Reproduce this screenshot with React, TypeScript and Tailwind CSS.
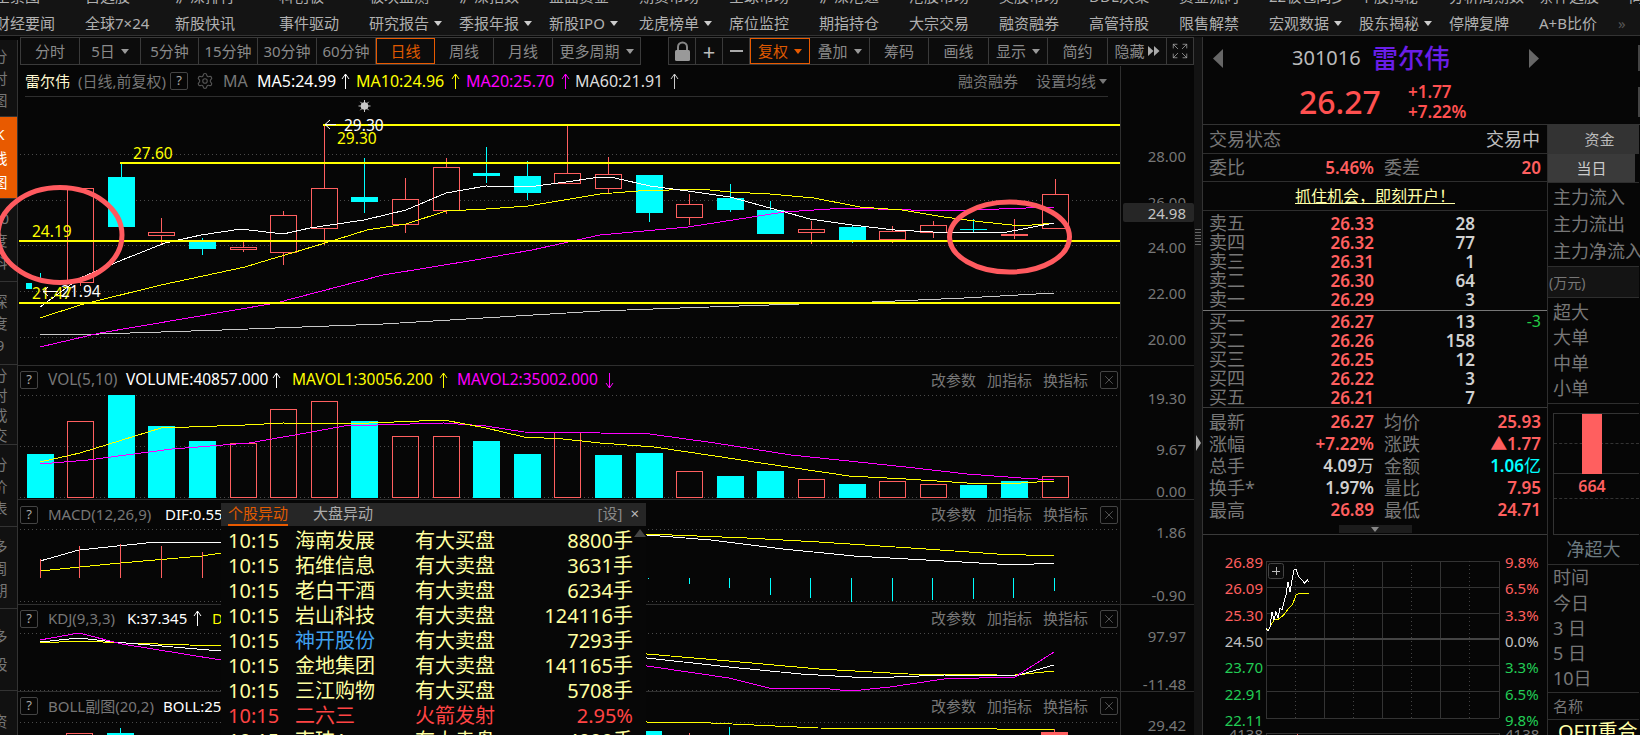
import { Expand, Settings, X as XIcon } from 'lucide-react';

const RED = '#ff5f5f';
const CYAN = '#00ffff';
const cx = (i: number) => 39.6 + 40.6 * i;
const pts = (p: number[][]) => p.map((q) => q.join(',')).join(' ');

// type, body top, body bottom, wick top, wick bottom
const candles: [string, number, number, number, number][] = [
    ['c', 283, 289, 270, 279],
    ['r', 188, 282, 188, 286],
    ['c', 177, 227, 163, 227],
    ['r', 232, 235, 218, 245],
    ['c', 242, 249, 238, 255],
    ['r', 247, 249, 242, 252],
    ['r', 215, 252, 211, 265],
    ['r', 188, 228, 125, 245],
    ['c', 197, 202, 158, 213],
    ['r', 199, 224, 178, 233],
    ['r', 167, 210, 158, 214],
    ['c', 173, 176, 147, 183],
    ['c', 176, 193, 161, 200],
    ['r', 173, 183, 125, 183],
    ['r', 174, 188, 157, 193],
    ['c', 175, 213, 175, 222],
    ['r', 204, 217, 194, 225],
    ['c', 198, 210, 184, 212],
    ['c', 210, 234, 201, 234],
    ['r', 229, 232, 221, 244],
    ['c', 227, 240, 225, 243],
    ['r', 231, 239, 226, 243],
    ['r', 225, 232, 221, 238],
    ['c', 229, 230, 219, 232],
    ['r', 234, 235, 219, 239],
    ['r', 194, 228, 179, 228],
];

const ma5 = [[40, 307], [80, 278], [122, 260], [165, 243], [201, 235], [241, 229], [283, 234], [310, 228], [364, 220], [406, 210], [446, 193], [486, 186], [528, 187], [566, 182], [600, 177], [615, 178], [650, 186], [688, 191], [730, 197], [770, 208], [810, 219], [852, 225], [895, 230], [933, 232], [975, 232], [1002, 233], [1054, 223]];
const ma10 = [[40, 318], [80, 305], [161, 285], [245, 267], [268, 260], [302, 250], [335, 240], [367, 230], [406, 224], [446, 211], [486, 209], [528, 206], [600, 194], [638, 191], [700, 189], [730, 192], [770, 194], [814, 198], [860, 207], [902, 210], [944, 217], [983, 222], [1021, 226], [1054, 223]];
const ma20 = [[40, 347], [100, 333], [276, 303], [383, 275], [475, 260], [532, 250], [600, 235], [688, 227], [784, 212], [845, 208], [944, 211], [1054, 207]];
const ma60 = [[40, 335], [100, 334], [222, 330], [383, 324], [600, 311], [680, 308], [799, 304], [872, 302], [964, 298], [1054, 293]];

const volTops: [string, number][] = [['c', 454], ['r', 421], ['c', 395], ['c', 426], ['c', 441], ['r', 443], ['r', 409], ['r', 401], ['c', 421], ['r', 436], ['r', 436], ['c', 441], ['c', 454], ['r', 432], ['c', 455], ['c', 453], ['r', 471], ['c', 476], ['c', 471], ['r', 479], ['c', 484], ['r', 481], ['r', 484], ['c', 485], ['c', 481], ['r', 476]];
const mavol1 = [[40, 462], [80, 453], [161, 428], [245, 425], [283, 423], [344, 424], [444, 420], [486, 428], [524, 437], [563, 439], [600, 443], [654, 447], [715, 456], [761, 463], [849, 476], [906, 479], [967, 483], [1021, 483], [1054, 481]];
const mavol2 = [[40, 464], [88, 460], [172, 449], [249, 443], [306, 433], [344, 426], [444, 423], [486, 426], [524, 432], [600, 433], [650, 434], [715, 443], [791, 455], [906, 467], [967, 474], [1021, 478], [1054, 480]];

const macdW = [[40, 561], [79, 550], [156, 542], [221, 542], [647, 535], [711, 540], [783, 549], [854, 556], [926, 560], [997, 564], [1015, 565], [1054, 563]];
const macdY = [[40, 571], [120, 563], [202, 556], [221, 553], [647, 534], [747, 538], [819, 542], [926, 549], [997, 554], [1054, 556]];
const macdRed: [number, number][] = [[40, 559], [79, 546], [120, 544], [161, 546], [202, 552]];
const macdCyan: [number, number][] = [[648, 579], [689, 584], [729, 588], [770, 595], [810, 598], [851, 602], [892, 601], [932, 600], [973, 599], [1013, 598], [1054, 591]];

const kdjM = [[40, 640], [79, 633], [122, 644], [221, 660], [647, 666], [729, 678], [769, 688], [819, 688], [851, 691], [890, 687], [944, 679], [1015, 677], [1054, 652]];
const kdjW = [[40, 642], [79, 638], [114, 642], [221, 651], [647, 658], [729, 667], [801, 674], [869, 678], [944, 675], [1015, 676], [1054, 665]];
const kdjY = [[40, 643], [79, 641], [126, 643], [221, 646], [647, 654], [729, 661], [819, 669], [908, 674], [997, 675], [1015, 675], [1054, 671]];

const navTop = ['全景图', '自选股', '沪深排行', '科创板', '板块监测', '沪深指数', '盘面资金', '期货市场', '全球市场', '沪深港通', '港股市场', '美股市场', 'DDE决策', '资金流向', '22板包同步', '个股揭秘', '分析周期数', '条件选股', '同花顺'];
const navBottom: [string, string, boolean][] = [
    ['财经要闻', 'w-[90px]', false],
    ['全球7×24', 'w-[90px]', false],
    ['新股快讯', 'w-[104px]', false],
    ['事件驱动', 'w-[90px]', false],
    ['研究报告', 'w-[90px]', true],
    ['季报年报', 'w-[90px]', true],
    ['新股IPO', 'w-[90px]', true],
    ['龙虎榜单', 'w-[90px]', true],
    ['席位监控', 'w-[90px]', false],
    ['期指持仓', 'w-[90px]', false],
    ['大宗交易', 'w-[90px]', false],
    ['融资融券', 'w-[90px]', false],
    ['高管持股', 'w-[90px]', false],
    ['限售解禁', 'w-[90px]', false],
    ['宏观数据', 'w-[90px]', true],
    ['股东揭秘', 'w-[90px]', true],
    ['停牌复牌', 'w-[90px]', false],
    ['A+B比价', 'w-[79px]', false],
];

const sideGroups: { h: string; gap: string; chars: string[]; active?: boolean }[] = [
    { h: 'h-[77px]', gap: 'gap-[6px]', chars: ['分', '时', '图'] },
    { h: 'h-[82px]', gap: 'gap-[8px]', chars: ['K', '线', '图'], active: true },
    { h: 'h-[83px]', gap: 'gap-[6px]', chars: ['10', '度', '科'] },
    { h: 'h-[83px]', gap: 'gap-[6px]', chars: ['探', '度', '9'] },
    { h: 'h-[80px]', gap: 'gap-[4px]', chars: ['分', '时', '成', '交'] },
    { h: 'h-[82px]', gap: 'gap-[6px]', chars: ['分', '价', '表'] },
    { h: 'h-[82px]', gap: 'gap-[6px]', chars: ['多', '周', '期'] },
    { h: 'h-[82px]', gap: 'gap-[12px]', chars: ['多', '股'] },
    { h: 'h-[60px]', gap: 'gap-[6px]', chars: ['资'] },
];

const popRows = [
    ['海南发展', '有大买盘', '8800手'],
    ['拓维信息', '有大卖盘', '3631手'],
    ['老白干酒', '有大卖盘', '6234手'],
    ['岩山科技', '有大卖盘', '124116手'],
    ['神开股份', '有大卖盘', '7293手'],
    ['金地集团', '有大卖盘', '141165手'],
    ['三江购物', '有大买盘', '5708手'],
    ['二六三', '火箭发射', '2.95%'],
    ['南玻A', '有大卖盘', '4000手'],
];

const asks = [['卖五', '26.33', '28'], ['卖四', '26.32', '77'], ['卖三', '26.31', '1'], ['卖二', '26.30', '64'], ['卖一', '26.29', '3']];
const bids = [['买一', '26.27', '13', '-3'], ['买二', '26.26', '158'], ['买三', '26.25', '12'], ['买四', '26.22', '3'], ['买五', '26.21', '7']];

function Caret({ className = '' }: { className?: string }) {
    return (
        <svg width="8" height="5" viewBox="0 0 8 5" className={className}>
            <polygon points="0,0 8,0 4,5" fill="currentColor" />
        </svg>
    );
}

function Arrow({ color, down = false }: { color: string; down?: boolean }) {
    return (
        <svg width="9" height="17" viewBox="0 0 9 17" className={down ? 'rotate-180' : ''}>
            <path d="M4.5 1V16M1 6L4.5 1L8 6" fill="none" stroke={color} strokeWidth="1" />
        </svg>
    );
}

function Ask() {
    return (
        <span className="flex h-[18px] w-[18px] items-center justify-center rounded-[2px] border border-[#444] text-[13px] text-[#aaa]">?</span>
    );
}

function Tools() {
    return (
        <div className="ml-auto flex items-center text-[15px] text-[#777]">
            <span className="w-[56px]">改参数</span>
            <span className="w-[56px]">加指标</span>
            <span className="w-[57px]">换指标</span>
            <span className="flex h-[18px] w-[18px] items-center justify-center rounded-[2px] border border-[#444] text-[#888]">
                <XIcon size={14} strokeWidth={1} />
            </span>
        </div>
    );
}

function Dots({ ys }: { ys: number[] }) {
    return (
        <>
            {ys.map((y) => (
                <line key={y} x1="20" x2="1122" y1={y + 0.5} y2={y + 0.5} stroke="#4a4a4a" strokeDasharray="1 3" />
            ))}
        </>
    );
}

function Line({ p, color }: { p: number[][]; color: string }) {
    return <polyline points={pts(p)} fill="none" stroke={color} strokeWidth="1" shapeRendering="crispEdges" />;
}

function MainChart() {
    return (
        <svg width="1102" height="268" viewBox="18 97 1102 268" className="block">
            <Dots ys={[154, 200, 245, 291, 337]} />
            {candles.map(([t, top, bot, wt, wb], i) => {
                const x = Math.round(cx(i));
                const c = t === 'c' ? CYAN : RED;
                return (
                    <g key={i} shapeRendering="crispEdges">
                        {i > 0 && <line x1={x + 0.5} x2={x + 0.5} y1={wt} y2={wb} stroke={c} />}
                        {i === 0 ? (
                            <rect x="26" y={top} width="6" height={bot - top} fill={c} />
                        ) : t === 'c' ? (
                            <rect x={x - 13} y={top} width="27" height={Math.max(bot - top, 1)} fill={c} />
                        ) : (
                            <rect x={x - 13 + 0.5} y={top + 0.5} width="26" height={bot - top} fill="#060606" stroke={c} />
                        )}
                    </g>
                );
            })}
            <line x1="40.5" x2="40.5" y1="273" y2="279" stroke={CYAN} />
            <Line p={ma60} color="#c8c8c8" />
            <Line p={ma20} color="#ff00ff" />
            <Line p={ma10} color="#ffff00" />
            <Line p={ma5} color="#ffffff" />
            <g shapeRendering="crispEdges" fill="#ffff00">
                <rect x="323" y="124" width="797" height="2" />
                <rect x="120" y="162" width="1000" height="2" />
                <rect x="19" y="240" width="1101" height="2" />
                <rect x="19" y="302" width="1101" height="2" />
            </g>
            <g className="text-[15.5px]">
                <text x="133" y="159" fill="#ffff00">27.60</text>
                <text x="337" y="144" fill="#ffff00">29.30</text>
                <text x="344" y="131" fill="#ffffff">29.30</text>
                <text x="32" y="237" fill="#ffff00">24.19</text>
                <text x="32" y="299" fill="#ffff00">21.47</text>
                <text x="61" y="297" fill="#ffffff">21.94</text>
            </g>
            <path d="M330 120L325 124.5L330 129M325 124.5H336" fill="none" stroke="#fff" />
            <path d="M48 287L43 291.5L48 296M43 291.5H58" fill="none" stroke="#fff" />
            <circle cx="364.5" cy="106" r="3.8" fill="#c8c8c8" />
            <path d="M364.5 100V112M358.5 106H370.5M360.3 101.8L368.7 110.2M368.7 101.8L360.3 110.2" stroke="#c8c8c8" />
        </svg>
    );
}

function VolChart() {
    return (
        <svg width="1102" height="105" viewBox="18 394 1102 105" className="block">
            <Dots ys={[395, 446, 497]} />
            {volTops.map(([t, top], i) => {
                const x = Math.round(cx(i));
                return t === 'c' ? (
                    <rect key={i} x={x - 13} y={top} width="27" height={498 - top} fill={CYAN} shapeRendering="crispEdges" />
                ) : (
                    <rect key={i} x={x - 13 + 0.5} y={top + 0.5} width="26" height={497 - top} fill="none" stroke={RED} shapeRendering="crispEdges" />
                );
            })}
            <Line p={mavol2} color="#ff00ff" />
            <Line p={mavol1} color="#ffff00" />
        </svg>
    );
}

function MacdChart() {
    return (
        <svg width="1102" height="75" viewBox="18 529 1102 75" className="block">
            <Dots ys={[529, 601]} />
            <Line p={macdW} color="#ffffff" />
            <Line p={macdY} color="#ffff00" />
            {macdRed.map(([x, y]) => (
                <line key={x} x1={x + 0.5} x2={x + 0.5} y1={y} y2="578" stroke={RED} shapeRendering="crispEdges" />
            ))}
            {macdCyan.map(([x, y]) => (
                <line key={x} x1={x + 0.5} x2={x + 0.5} y1="578" y2={y} stroke={CYAN} shapeRendering="crispEdges" />
            ))}
        </svg>
    );
}

function KdjChart() {
    return (
        <svg width="1102" height="59" viewBox="18 632 1102 59" className="block">
            <Dots ys={[633, 690]} />
            <Line p={kdjY} color="#ffff00" />
            <Line p={kdjW} color="#ffffff" />
            <Line p={kdjM} color="#ff00ff" />
        </svg>
    );
}

function BollChart() {
    return (
        <svg width="1102" height="15" viewBox="18 720 1102 15" className="block">
            <Dots ys={[722]} />
            <g shapeRendering="crispEdges">
                <rect x="107" y="733" width="27" height="3" fill={CYAN} />
                <rect x="66.5" y="733.5" width="26" height="5" fill="none" stroke={RED} />
                <line x1="120.5" x2="120.5" y1="728" y2="733" stroke={CYAN} />
                <rect x="635" y="731" width="27" height="5" fill={CYAN} />
                <rect x="1041" y="732" width="27" height="4" fill={RED} />
                <line x1="1054.5" x2="1054.5" y1="729" y2="732" stroke={RED} />
                <line x1="689.5" x2="689.5" y1="733" y2="736" stroke={RED} />
                <line x1="729.5" x2="729.5" y1="727" y2="736" stroke={CYAN} />
            </g>
            <Line p={[[221, 721], [647, 722], [711, 723], [818, 728], [997, 729], [1054, 730]]} color="#ffff00" />
        </svg>
    );
}

function MiniChart() {
    const whiteP = [[232, 350], [238, 358], [244, 345], [250, 300], [256, 325], [262, 300], [268, 318], [274, 290], [280, 295], [286, 270], [292, 250], [298, 210], [304, 240], [310, 205], [316, 175], [322, 172], [330, 195], [340, 205], [348, 215], [356, 205], [362, 212]];
    const yellowP = [[232, 352], [240, 355], [250, 335], [258, 322], [270, 322], [285, 310], [300, 290], [312, 278], [322, 250], [335, 244], [362, 244]];
    const conv = (p: number[][]) => p.map(([x, y]) => [(x - 232) / 3, (y - 148) / 3]);
    return (
        <svg width="234" height="158" viewBox="0 0 234 158" className="block">
            <g shapeRendering="crispEdges" stroke="#333">
                {[0, 26, 52, 78, 104, 130, 157].map((y) => (
                    <line key={y} x1="0" x2="233" y1={y + 0.5} y2={y + 0.5} />
                ))}
                {[0, 58, 116, 174, 233].map((x) => (
                    <line key={x} x1={x + 0.5} x2={x + 0.5} y1="0" y2="157" />
                ))}
                {[29, 87, 145, 203].map((x) => (
                    <line key={x} x1={x + 0.5} x2={x + 0.5} y1="0" y2="157" strokeDasharray="1 3" stroke="#444" />
                ))}
                <rect x="0" y="77" width="233" height="2" fill="#444" stroke="none" />
            </g>
            <Line p={conv(yellowP)} color="#ffff00" />
            <Line p={conv(whiteP)} color="#ffffff" />
            <rect x="2.5" y="2.5" width="15" height="15" rx="2" fill="#0a0a0a" stroke="#444" />
            <path d="M10 6V14M6 10H14" stroke="#bbb" shapeRendering="crispEdges" />
        </svg>
    );
}

function ToolCell({ w, active, children }: { w: string; active?: boolean; children: React.ReactNode }) {
    return (
        <div className={`flex h-full items-center justify-center gap-[6px] border-r ${w} ${active ? 'border border-[#e85a00] text-[#e05a00]' : 'border-[#3a3a3a]'}`}>
            {children}
        </div>
    );
}

function Toolbar() {
    return (
        <div className="flex h-[28px] items-start text-[15px] text-[#8a8a8a]">
            <div className="ml-[2px] flex h-[28px] border border-[#3a3a3a] bg-[#0c0c0c]">
                <ToolCell w="w-[59px]">分时</ToolCell>
                <ToolCell w="w-[61px]">5日<Caret className="text-[#999]" /></ToolCell>
                <ToolCell w="w-[58px]">5分钟</ToolCell>
                <ToolCell w="w-[59px]">15分钟</ToolCell>
                <ToolCell w="w-[59px]">30分钟</ToolCell>
                <ToolCell w="w-[59px]">60分钟</ToolCell>
                <ToolCell w="w-[59px]" active>日线</ToolCell>
                <ToolCell w="w-[59px]">周线</ToolCell>
                <ToolCell w="w-[59px]">月线</ToolCell>
                <div className="flex w-[87px] items-center justify-center gap-[6px]">更多周期<Caret className="text-[#999]" /></div>
            </div>
            <div className="ml-[27px] flex h-[28px] border border-[#3a3a3a] bg-[#0c0c0c]">
                <ToolCell w="w-[27px]">
                    <svg width="17" height="21" viewBox="0 0 17 21">
                        <path d="M4 9V6a4.5 4.5 0 0 1 9 0v3" fill="none" stroke="#888" strokeWidth="2" />
                        <rect x="1" y="9" width="15" height="11" rx="1.5" fill="#999" />
                    </svg>
                </ToolCell>
                <ToolCell w="w-[27px]"><span className="text-[22px] leading-none text-[#bbb]">+</span></ToolCell>
                <ToolCell w="w-[27px]"><span className="h-[2px] w-[13px] bg-[#aaa]" /></ToolCell>
                <ToolCell w="w-[60px]" active>复权<Caret className="text-[#e85a00]" /></ToolCell>
                <ToolCell w="w-[60px]">叠加<Caret className="text-[#999]" /></ToolCell>
                <ToolCell w="w-[59px]">筹码</ToolCell>
                <ToolCell w="w-[60px]">画线</ToolCell>
                <ToolCell w="w-[59px]">显示<Caret className="text-[#999]" /></ToolCell>
                <ToolCell w="w-[60px]">简约</ToolCell>
                <ToolCell w="w-[59px]">
                    <span className="flex items-center gap-[3px]">隐藏
                        <svg width="12" height="10" viewBox="0 0 12 10"><path d="M0 0L5.5 5L0 10ZM6 0L11.5 5L6 10Z" fill="#aaa" /></svg>
                    </span>
                </ToolCell>
                <div className="flex w-[26px] items-center justify-center text-[#aaa]"><Expand size={18} strokeWidth={1} /></div>
            </div>
        </div>
    );
}

function Axis({ children, className = '' }: { children: React.ReactNode; className?: string }) {
    return <div className={`relative flex h-full w-[74px] flex-col items-end border-l border-[#2e2e2e] pr-[8px] text-[15px] leading-[18px] text-[#777] ${className}`}>{children}</div>;
}

function Center() {
    return (
        <div className="w-[1176px] shrink-0">
            <Toolbar />
            {/* main chart */}
            <div className="mt-[1px] flex h-[300px] border-b border-[#2e2e2e]">
                <div className="w-[1102px]">
                    <div className="ml-[7px] flex h-[31px] w-[1083px] items-center border-b border-[#2e2e2e] text-[16px] text-[#777]">
                        <span className="w-[53px] text-[15px] text-[#fff8d0]">雷尔伟</span>
                        <span className="w-[92px] text-[15px]">(日线,前复权)</span>
                        <Ask />
                        <span className="ml-[8px] flex w-[27px] text-[#555]"><Settings size={18} strokeWidth={1.5} /></span>
                        <span className="w-[34px]">MA</span>
                        <span className="w-[84px] text-white">MA5:24.99</span>
                        <span className="w-[15px]"><Arrow color="#fff" /></span>
                        <span className="w-[95px] text-[#ffff00]">MA10:24.96</span>
                        <span className="w-[15px]"><Arrow color="#ffff00" /></span>
                        <span className="w-[95px] text-[#ff00ff]">MA20:25.70</span>
                        <span className="w-[14px]"><Arrow color="#ff00ff" /></span>
                        <span className="w-[95px] text-[#ddd]">MA60:21.91</span>
                        <Arrow color="#ccc" />
                        <span className="ml-auto w-[78px] text-[15px]">融资融券</span>
                        <span className="flex w-[72px] items-center gap-[3px] text-[15px]">设置均线<Caret /></span>
                    </div>
                    <MainChart />
                </div>
                <Axis>
                    <span className="mt-[81px]">28.00</span>
                    <span className="mt-[28px]">26.00</span>
                    <span className="mt-[27px]">24.00</span>
                    <span className="mt-[28px]">22.00</span>
                    <span className="mt-[28px]">20.00</span>
                    <span className="absolute left-[2px] right-0 top-[137px] flex h-[19px] items-center justify-end rounded-[2px] bg-[#262626] pr-[8px] text-[#c4c4c4]">24.98</span>
                </Axis>
            </div>
            {/* VOL */}
            <div className="flex h-[134px] border-b border-[#2e2e2e]">
                <div className="w-[1102px]">
                    <div className="flex h-[28px] items-center pl-[2px] text-[15.5px] text-[#777]">
                        <Ask />
                        <span className="ml-[10px] w-[78px]">VOL(5,10)</span>
                        <span className="w-[146px] text-white">VOLUME:40857.000</span>
                        <span className="w-[20px]"><Arrow color="#fff" /></span>
                        <span className="w-[147px] text-[#ffff00]">MAVOL1:30056.200</span>
                        <span className="w-[18px]"><Arrow color="#ffff00" /></span>
                        <span className="w-[148px] text-[#ff00ff]">MAVOL2:35002.000</span>
                        <Arrow color="#ff00ff" down />
                        <Tools />
                        <span className="w-[2px]" />
                    </div>
                    <VolChart />
                </div>
                <Axis>
                    <span className="mt-[23px]">19.30</span>
                    <span className="mt-[33px]">9.67</span>
                    <span className="mt-[24px]">0.00</span>
                </Axis>
            </div>
            {/* MACD */}
            <div className="flex h-[105px] border-b border-[#2e2e2e]">
                <div className="w-[1102px]">
                    <div className="flex h-[29px] items-center pl-[2px] text-[15px] text-[#777]">
                        <Ask />
                        <span className="ml-[10px] w-[117px]">MACD(12,26,9)</span>
                        <span className="text-white">DIF:0.55</span>
                        <Tools />
                        <span className="w-[2px]" />
                    </div>
                    <MacdChart />
                </div>
                <Axis>
                    <span className="mt-[23px]">1.86</span>
                    <span className="mt-[45px]">-0.90</span>
                </Axis>
            </div>
            {/* KDJ */}
            <div className="flex h-[87px] border-b border-[#2e2e2e]">
                <div className="w-[1102px]">
                    <div className="flex h-[27px] items-center pl-[2px] text-[15px] text-[#777]">
                        <Ask />
                        <span className="ml-[10px] w-[79px]">KDJ(9,3,3)</span>
                        <span className="w-[66px] text-white">K:37.345</span>
                        <span className="w-[19px]"><Arrow color="#fff" /></span>
                        <span className="text-[#ffff00]">D</span>
                        <Tools />
                        <span className="w-[2px]" />
                    </div>
                    <KdjChart />
                </div>
                <Axis>
                    <span className="mt-[22px]">97.97</span>
                    <span className="mt-[30px]">-11.48</span>
                </Axis>
            </div>
            {/* BOLL */}
            <div className="flex h-[43px] overflow-hidden">
                <div className="w-[1102px]">
                    <div className="flex h-[28px] items-center pl-[2px] text-[15px] text-[#777]">
                        <Ask />
                        <span className="ml-[10px] w-[115px]">BOLL副图(20,2)</span>
                        <span className="text-white">BOLL:25</span>
                        <Tools />
                        <span className="w-[2px]" />
                    </div>
                    <BollChart />
                </div>
                <Axis>
                    <span className="mt-[24px]">29.42</span>
                </Axis>
            </div>
        </div>
    );
}

function BookRow({ r }: { r: string[] }) {
    return (
        <div className="grid h-[19px] grid-cols-[171px_101px_66px] items-center leading-[19px]">
            <div className="flex items-center justify-between pl-[6px] pr-0">
                <span className="text-[18px] text-[#777]">{r[0]}</span>
                <span className="text-[17px] font-semibold text-[#ff5f5f]">{r[1]}</span>
            </div>
            <span className="text-right text-[17px] font-semibold text-[#d0d0d0]">{r[2]}</span>
            <span className="text-right text-[16px] text-[#22cc44]">{r[3]}</span>
        </div>
    );
}

function StatRow({ a, b, c, d, bColor = 'text-[#ff5f5f]', dColor = 'text-[#ff5f5f]' }: { a: string; b: React.ReactNode; c: string; d: React.ReactNode; bColor?: string; dColor?: string }) {
    return (
        <div className="grid h-[22px] grid-cols-[171px_167px] items-center text-[18px] leading-[22px] text-[#777]">
            <div className="flex items-center justify-between pl-[6px]">
                <span>{a}</span>
                <span className={`text-[17px] font-semibold ${bColor}`}>{b}</span>
            </div>
            <div className="flex items-center justify-between pl-[10px]">
                <span>{c}</span>
                <span className={`text-[17px] font-semibold ${dColor}`}>{d}</span>
            </div>
        </div>
    );
}

function QuoteTable() {
    return (
        <div className="w-[345px] shrink-0 border-r border-[#2e2e2e]">
            <div className="flex h-[29px] items-center justify-between border-b border-[#2e2e2e] pl-[6px] pr-[7px] text-[18px] text-[#777]">
                <span>交易状态</span>
                <span className="text-[#c0c0c0]">交易中</span>
            </div>
            <div className="grid h-[28px] grid-cols-[171px_167px] items-center border-b border-[#2e2e2e] text-[18px] leading-[27px] text-[#777]">
                <div className="flex items-center justify-between pl-[6px]">
                    <span>委比</span>
                    <span className="text-[17px] font-semibold text-[#ff5f5f]">5.46%</span>
                </div>
                <div className="flex items-center justify-between pl-[10px]">
                    <span>委差</span>
                    <span className="text-[17px] font-semibold text-[#ff5f5f]">20</span>
                </div>
            </div>
            <div className="flex h-[29px] items-center justify-center border-b border-[#2e2e2e] text-[16px] text-[#ffffa8] underline">抓住机会，即刻开户！</div>
            <div className="pt-[3px]">
                {asks.map((r) => <BookRow key={r[0]} r={r} />)}
            </div>
            <div className="my-[1px] h-px bg-[#777]" />
            {bids.map((r) => <BookRow key={r[0]} r={r} />)}
            <div className="h-px bg-[#3a3a3a]" />
            <div className="pt-[3px]">
                <StatRow a="最新" b="26.27" c="均价" d="25.93" />
                <StatRow a="涨幅" b="+7.22%" c="涨跌" d="▲1.77" />
                <StatRow a="总手" b={<>4.09<span className="font-normal">万</span></>} bColor="text-[#d0d0d0]" c="金额" d={<>1.06<span className="font-normal">亿</span></>} dColor="text-[#00ffff]" />
                <StatRow a="换手*" b="1.97%" bColor="text-[#d0d0d0]" c="量比" d="7.95" />
                <StatRow a="最高" b="26.89" c="最低" d="24.71" />
            </div>
            <div className="mt-[4px] flex h-[9px] justify-center border-b border-transparent">
                <div className="flex h-[8px] w-[73px] items-center justify-center bg-[#1c1c1c] text-[#888]"><Caret /></div>
            </div>
            <div className="h-px bg-[#3a3a3a]" />
            <div className="mt-[19px] flex">
                <div className="flex h-[174px] w-[60px] flex-col items-end justify-between text-[15px] leading-[16px] text-[#ff5f5f]">
                    <span>26.89</span>
                    <span>26.09</span>
                    <span>25.30</span>
                    <span className="text-[#c0c0c0]">24.50</span>
                    <span className="text-[#22cc55]">23.70</span>
                    <span className="text-[#22cc55]">22.91</span>
                    <span className="text-[#22cc55]">22.11</span>
                </div>
                <div className="ml-[3px] mt-[7px] w-[233px]"><MiniChart /></div>
                <div className="ml-[6px] flex h-[174px] flex-col justify-between text-[15px] leading-[16px] text-[#ff5f5f]">
                    <span>9.8%</span>
                    <span>6.5%</span>
                    <span>3.3%</span>
                    <span className="text-[#c0c0c0]">0.0%</span>
                    <span className="text-[#22cc55]">3.3%</span>
                    <span className="text-[#22cc55]">6.5%</span>
                    <span className="text-[#22cc55]">9.8%</span>
                </div>
            </div>
            <div className="mt-[-2px] flex text-[15px] leading-[16px] text-[#777]">
                <span className="w-[60px] text-right">4138</span>
                <div className="ml-[3px] mt-[7px] w-[234px] border-x border-t border-[#333]">
                    <div className="ml-[30px] h-[4px] w-px bg-[#ff5f5f]" />
                </div>
                <span className="ml-[5px]">4138</span>
            </div>
        </div>
    );
}

function SidePanel() {
    return (
        <div className="w-[91px] shrink-0 text-[18px] text-[#777]">
            <div className="flex h-[29px] items-center justify-center bg-[#333] pl-[12px] text-[15px] text-[#bbb]">资金</div>
            <div className="flex h-[28px] w-[87px] items-center justify-center bg-[#3a3a3a] text-[15px] text-[#ccc]">当日</div>
            <div className="h-px bg-[#2e2e2e]" />
            <div className="flex h-[84px] flex-col justify-center gap-[6px] border-b border-[#2e2e2e] pl-[5px] leading-[21px]">
                <span className="whitespace-nowrap">主力流入</span>
                <span className="whitespace-nowrap">主力流出</span>
                <span className="whitespace-nowrap">主力净流入</span>
            </div>
            <div className="flex h-[31px] items-center border-b border-[#2e2e2e] bg-[#141414] pl-[1px] text-[14px]">(万元)</div>
            <div className="flex h-[106px] flex-col justify-center gap-[4px] border-b border-[#2e2e2e] pl-[5px] leading-[21.5px]">
                <span>超大</span>
                <span>大单</span>
                <span>中单</span>
                <span>小单</span>
            </div>
            <div className="ml-[5px] mt-[9px] h-[122px] border-y border-l border-[#333]">
                <div className="relative flex h-[60px] justify-center border-b border-[#333]">
                    <div className="absolute left-0 right-0 top-[29px] border-t border-dashed border-[#333]" />
                    <div className="relative ml-[-9px] h-[60px] w-[20px] bg-[#ff5f5f]" />
                </div>
                <div className="flex h-[24px] items-center justify-center pr-[9px] text-[16px] font-semibold leading-none text-[#ff5f5f]">664</div>
                <div className="border-t border-dashed border-[#333]" />
            </div>
            <div className="flex h-[30px] items-center justify-center border-b border-[#2e2e2e] text-[#6c7a80]">净超大</div>
            <div className="flex h-[127px] flex-col justify-center pl-[5px] leading-[25.3px]">
                <span>时间</span>
                <span>今日</span>
                <span>3 日</span>
                <span>5 日</span>
                <span>10日</span>
            </div>
            <div className="flex h-[28px] items-center border-y border-[#2e2e2e] pl-[5px] text-[15px]">名称</div>
            <div className="whitespace-nowrap pl-[10px] text-[20px] leading-[24px] text-[#ffffa8]">QFII重合</div>
        </div>
    );
}

function Popup() {
    return (
        <div className="absolute left-[221px] top-[503px] h-[232px] w-[425px] overflow-hidden bg-[#070707]">
            <div className="flex h-[23px] items-start bg-[#262626] text-[15px] leading-[21px]">
                <span className="ml-[7px] h-[23px] w-[60px] border-b-2 border-[#e85a00] text-[#e05a00]">个股异动</span>
                <span className="ml-[25px] text-[#aaa]">大盘异动</span>
                <span className="ml-auto text-[#888]">[设]</span>
                <span className="ml-[8px] mr-[7px] text-[#bbb]">×</span>
            </div>
            <div className="pl-[7px] pt-[2px] text-[20px] leading-[25px] text-[#ffffa0]">
                {popRows.map((r, i) => (
                    <div key={i} className={`flex h-[25px] w-[405px] whitespace-nowrap ${i === 7 ? 'text-[#ff4444]' : ''}`}>
                        <span className="w-[67px]">10:15</span>
                        <span className={`w-[120px] ${i === 4 ? 'text-[#3fa0ee]' : ''}`}>{r[0]}</span>
                        <span className="w-[80px]">{r[1]}</span>
                        <span className="flex-1 text-right">{r[2]}</span>
                    </div>
                ))}
            </div>
            <svg width="12" height="8" viewBox="0 0 12 8" className="absolute right-[0px] top-[26px]">
                <polygon points="0,8 12,8 6,0" fill="#444" />
            </svg>
        </div>
    );
}

export default function App() {
    return (
        <div className="relative h-[735px] w-[1640px] overflow-hidden bg-[#060606] font-['Noto_Sans','Noto_Sans_CJK_SC',sans-serif]">
            {/* top nav */}
            <div className="h-[36px] overflow-hidden border-b border-[#333] bg-[#141414] text-[15px] text-[#b0b0b0]">
                <div className="ml-[-5px] mt-[-14px] flex h-[20px] items-center whitespace-nowrap">
                    {navTop.map((t, i) => (
                        <span key={i} className={i === 2 ? 'w-[104px] shrink-0' : 'w-[90px] shrink-0'}>{t}</span>
                    ))}
                </div>
                <div className="ml-[-5px] mt-[7px] flex h-[20px] items-center whitespace-nowrap">
                    {navBottom.map(([t, w, caret]) => (
                        <span key={t} className={`flex shrink-0 items-center gap-[5px] ${w}`}>
                            {t}
                            {caret && <Caret className="text-[#ccc]" />}
                        </span>
                    ))}
                    <span className="text-[#555]">&raquo;</span>
                </div>
            </div>

            <div className="flex h-[699px] pt-px">
                {/* left tabs */}
                <div className="mt-[3px] w-[18px] shrink-0 overflow-hidden border-r border-[#333] bg-[#111] text-[15px] leading-[16px] text-[#777]">
                    {sideGroups.map((g, i) => (
                        <div key={i} className={`flex flex-col justify-center overflow-hidden border-b border-[#333] pl-0 ${g.h} ${g.gap} ${g.active ? 'bg-[#e85a00] text-white' : ''}`}>
                            {g.chars.map((c, j) => (
                                <span key={j} className="ml-[-8px] w-[16px] whitespace-nowrap text-center">{c}</span>
                            ))}
                        </div>
                    ))}
                </div>

                <Center />

                {/* splitter */}
                <div className="flex w-[9px] shrink-0 flex-col items-center border-r border-[#333] bg-[#131313] pt-[190px]">
                    <div className="h-[18px] w-[6px] bg-[repeating-linear-gradient(0deg,#666_0,#666_1px,transparent_1px,transparent_3px)]" />
                    <svg width="5" height="16" viewBox="0 0 5 16" className="mt-[190px]"><polygon points="0,0 5,8 0,16" fill="#aaa" /></svg>
                </div>

                {/* quote */}
                <div className="min-w-0 flex-1">
                    <div className="h-[88px] border-b border-[#333]">
                        <div className="flex h-[42px] items-center">
                            <svg width="10" height="19" viewBox="0 0 10 19" className="ml-[10px]"><polygon points="10,0 0,9.5 10,19" fill="#666" /></svg>
                            <span className="ml-[69px] w-[80px] text-[20px] text-[#bbb]">301016</span>
                            <span className="text-[26px] font-medium leading-none text-[#6a1ee8]">雷尔伟</span>
                            <svg width="10" height="19" viewBox="0 0 10 19" className="ml-[79px]"><polygon points="0,0 10,9.5 0,19" fill="#666" /></svg>
                            <span className="ml-auto h-[26px] w-[2px] bg-[#444]" />
                        </div>
                        <div className="flex h-[46px] items-center">
                            <span className="ml-[96px] w-[109px] text-[32px] font-medium leading-none text-[#ff5050]">26.27</span>
                            <div className="flex flex-col text-[17px] font-semibold leading-[20px] text-[#ff5050]">
                                <span>+1.77</span>
                                <span>+7.22%</span>
                            </div>
                            <span className="ml-auto h-[30px] w-[2px] bg-[#444]" />
                        </div>
                    </div>
                    <div className="flex">
                        <QuoteTable />
                        <SidePanel />
                    </div>
                </div>
            </div>

            <Popup />

            {/* hand-drawn circles on top of the chart */}
            <svg width="1640" height="735" viewBox="0 0 1640 735" className="pointer-events-none absolute left-0 top-0">
                <ellipse cx="60" cy="235" rx="62" ry="47.5" fill="none" stroke="#ff5a5f" strokeWidth="5" />
                <ellipse cx="1009.5" cy="237" rx="60" ry="35" fill="none" stroke="#ff5a5f" strokeWidth="5" />
            </svg>
        </div>
    );
}
